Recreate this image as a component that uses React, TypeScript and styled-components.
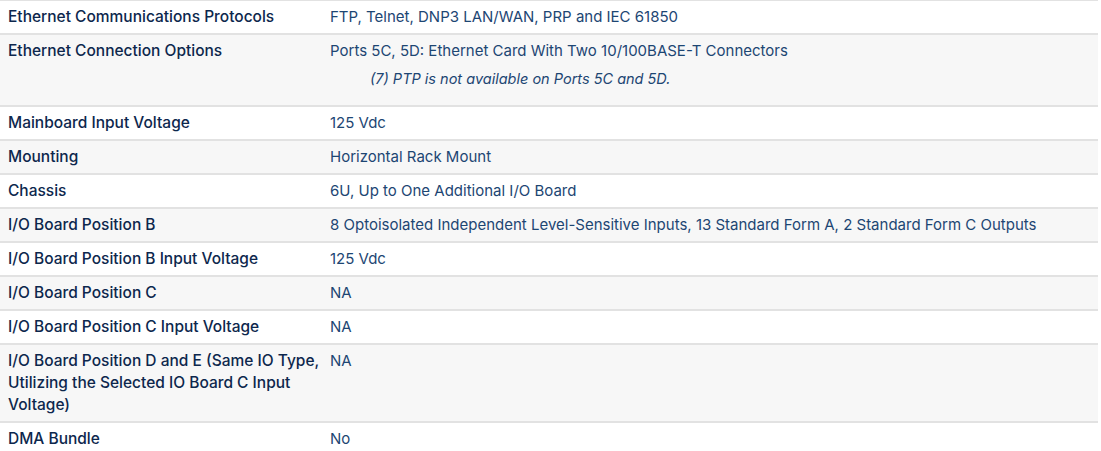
import React from "react";
import styled, { createGlobalStyle } from "styled-components";

const Global = createGlobalStyle`
  html, body { margin: 0; padding: 0; background: #ffffff; }
  body { font-family: Inter, "Open Sans", "Liberation Sans", sans-serif; }
`;

const Table = styled.div`
  width: 1098px;
  display: flex;
  flex-direction: column;
  border-top: 1px solid #e2e2e2;
`;

const Row = styled.div<{ $alt: boolean }>`
  display: grid;
  grid-template-columns: 322px 1fr;
  background: ${(p) => (p.$alt ? "#f7f7f7" : "#ffffff")};
  border-bottom: 2px solid #e2e2e2;
`;

const Label = styled.div`
  padding: 5px 0 5px 8px;
  font-size: 15.5px;
  line-height: 22px;
  font-weight: 500;
  color: #0d274d;
`;

const Value = styled.div`
  padding: 5px 8px;
  font-size: 15px;
  line-height: 22px;
  font-weight: 400;
  color: #1d4673;
`;

const Note = styled.div`
  margin: 6px 0 10px 40px;
  font-size: 14.5px;
  font-style: italic;
  color: #1d4673;
`;

type Item = { label: string; value: string; note?: string };

const rows: Item[] = [
  { label: "Ethernet Communications Protocols", value: "FTP, Telnet, DNP3 LAN/WAN, PRP and IEC 61850" },
  {
    label: "Ethernet Connection Options",
    value: "Ports 5C, 5D: Ethernet Card With Two 10/100BASE-T Connectors",
    note: "(7) PTP is not available on Ports 5C and 5D.",
  },
  { label: "Mainboard Input Voltage", value: "125 Vdc" },
  { label: "Mounting", value: "Horizontal Rack Mount" },
  { label: "Chassis", value: "6U, Up to One Additional I/O Board" },
  {
    label: "I/O Board Position B",
    value: "8 Optoisolated Independent Level-Sensitive Inputs, 13 Standard Form A, 2 Standard Form C Outputs",
  },
  { label: "I/O Board Position B Input Voltage", value: "125 Vdc" },
  { label: "I/O Board Position C", value: "NA" },
  { label: "I/O Board Position C Input Voltage", value: "NA" },
  {
    label: "I/O Board Position D and E (Same IO Type, Utilizing the Selected IO Board C Input Voltage)",
    value: "NA",
  },
  { label: "DMA Bundle", value: "No" },
];

export default function App() {
  return (
    <>
      <Global />
      <Table>
        {rows.map((r, i) => (
          <Row key={r.label} $alt={i % 2 === 1}>
            <Label>{r.label}</Label>
            <Value>
              {r.value}
              {r.note && <Note>{r.note}</Note>}
            </Value>
          </Row>
        ))}
      </Table>
    </>
  );
}
